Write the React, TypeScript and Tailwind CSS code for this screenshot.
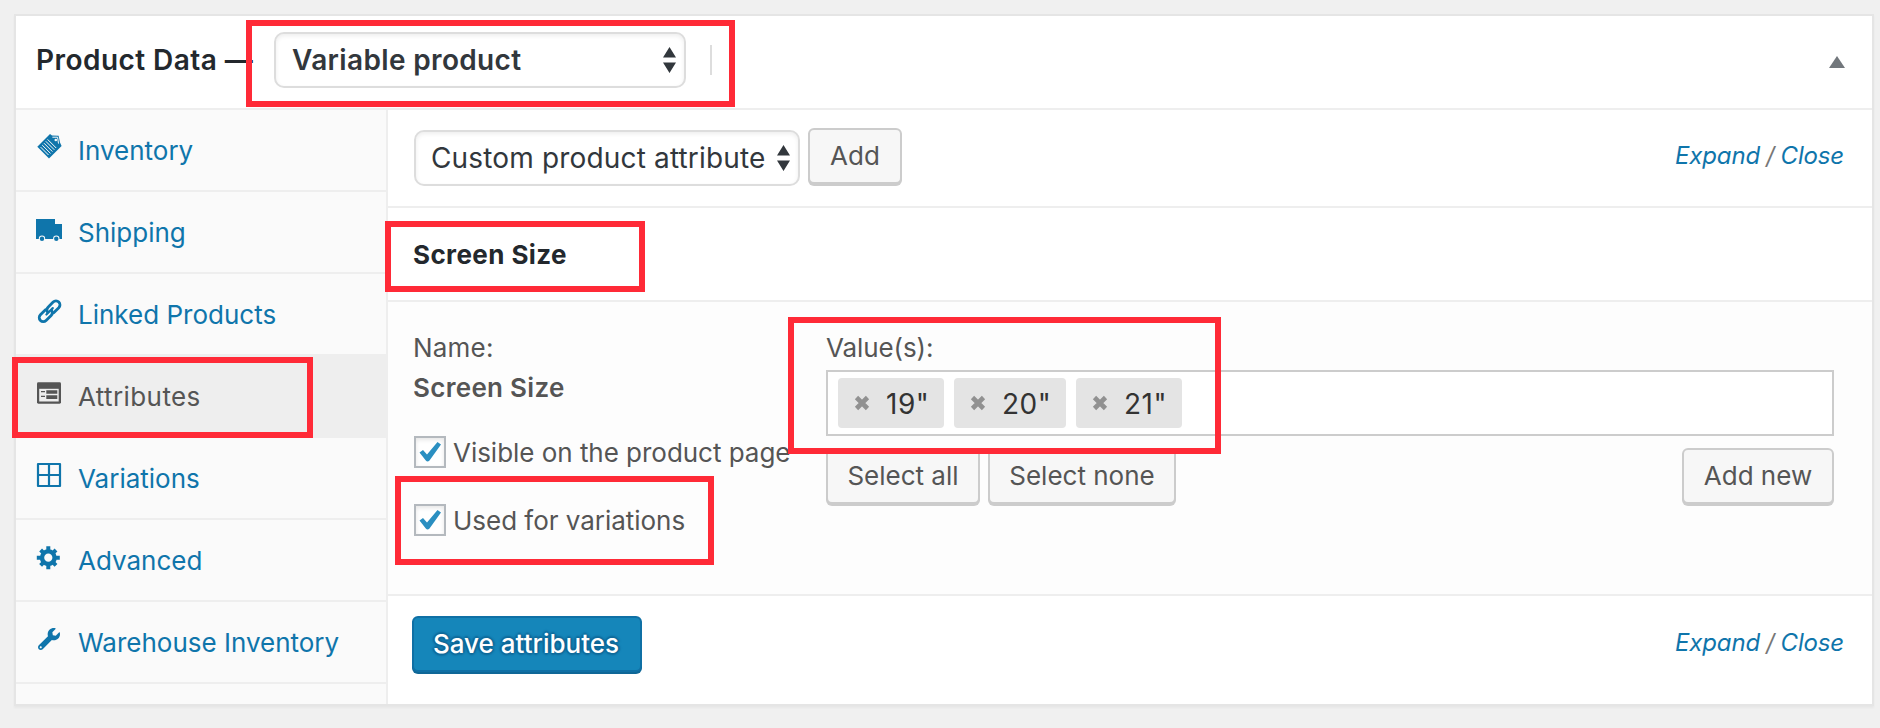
import React from "react";
import { FaWrench } from "react-icons/fa";

function InventoryIcon() {
  return (
    <svg viewBox="0 0 28 28" className="h-7 w-7">
      <path d="M1.3 13.8 14 1l2 1.6 6.6.1 1.4 6.9 1.6 3.4L13 25.5z" fill="currentColor" />
      <path
        d="M11.6 6.4l8.600 8.600M9.800 8.300l8.500 8.500M8 10.200l8.400 8.400M6.200 12.100l8.300 8.300M4.600 14.100l7.900 7.900"
        stroke="#fafafa"
        strokeWidth="1"
      />
      <path d="M16.4 4.200h5.200l.9 6.400" fill="none" stroke="#fafafa" strokeWidth="1" />
      <circle cx="19.8" cy="7" r="1.3" fill="#fafafa" />
    </svg>
  );
}

function TruckIcon() {
  return (
    <svg viewBox="0 0 28 28" className="h-7 w-7">
      <path d="M0 4h19v5h7v15H0z" fill="currentColor" />
      <circle cx="6" cy="23.8" r="3.2" fill="#fafafa" />
      <circle cx="20.3" cy="23.8" r="3.2" fill="#fafafa" />
      <circle cx="6" cy="23.8" r="2.2" fill="currentColor" />
      <circle cx="20.3" cy="23.8" r="2.2" fill="currentColor" />
    </svg>
  );
}

function LinkIcon() {
  return (
    <svg viewBox="0 0 28 28" className="h-7 w-7">
      <g
        transform="translate(13.6 14.3) rotate(-45)"
        fill="none"
        stroke="currentColor"
        strokeWidth="2.8"
        strokeLinecap="round"
      >
        <path d="M1.800 4H9a4 4 0 0 0 0-8H1.800a4 4 0 0 0-3.800 3" />
        <path d="M-1.800-4H-9a4 4 0 0 0 0 8H-1.800a4 4 0 0 0 3.800-3" />
        <path d="M-4.500 0h9" strokeWidth="2.2" />
      </g>
    </svg>
  );
}

function AttributesIcon() {
  return (
    <svg viewBox="0 0 28 28" className="h-7 w-7">
      <rect x="1" y="3.2" width="24" height="21.5" rx="1.4" fill="currentColor" />
      <path d="M3.2 9.8h19.5v12.7H3.2z" fill="#eee" />
      <path d="M5 12h4v1.2H5zM5 16.8h4V18H5zM10.3 11.3H21.3v3.5H10.3zM10.3 16.2H21.3v3.8H10.3z" fill="currentColor" />
    </svg>
  );
}

function GridIcon() {
  return (
    <svg viewBox="0 0 28 28" className="h-7 w-7">
      <path d="M2 3h22v22H2zM13 3v22M2 14h22" fill="none" stroke="currentColor" strokeWidth="2.2" strokeLinejoin="round" />
    </svg>
  );
}

function GearIcon() {
  return (
    <svg viewBox="0 0 28 28" className="h-7 w-7">
      <g stroke="currentColor" transform="translate(12.3 14.7)">
        <circle r="6.3" fill="none" strokeWidth="4.4" />
        <path
          d="M0-11.5V-7M0 7v4.500M-11.5 0H-7M7 0h4.500M-7.700-7.700-5-5M5 5l2.700 2.700M-7.700 7.700-5 5M5-5l2.700-2.700"
          strokeWidth="4"
        />
      </g>
    </svg>
  );
}

const menu = [
  { label: "Inventory", icon: <InventoryIcon /> },
  { label: "Shipping", icon: <TruckIcon /> },
  { label: "Linked Products", icon: <LinkIcon /> },
  { label: "Attributes", icon: <AttributesIcon />, active: true },
  { label: "Variations", icon: <GridIcon /> },
  { label: "Advanced", icon: <GearIcon /> },
  { label: "Warehouse Inventory", icon: <FaWrench className="ml-0.5 h-[22px] w-[22px]" /> },
];

function Arrows() {
  return (
    <svg viewBox="0 0 13 26" className="h-[26px] w-[13px] shrink-0" fill="#32373c">
      <path d="M0 10.500 6.500 0 13 10.500zM0 15.500 6.500 26 13 15.500z" />
    </svg>
  );
}

function Button({ children, className }: { children: React.ReactNode; className: string }) {
  return (
    <button
      className={`h-14 rounded-md border-2 border-[#ccc] bg-[#f7f7f7] text-[26px] leading-none text-[#555] shadow-[0_2px_0_#ccc] ${className}`}
    >
      {children}
    </button>
  );
}

function ExpandClose() {
  return (
    <div className="mr-[28px] text-[24px] leading-[30px] tracking-[-0.15px] text-[#777] italic">
      <a className="font-[450] text-[#0f75ab]">Expand</a>
      <span className="mx-[6px]">/</span>
      <a className="font-[450] text-[#0f75ab]">Close</a>
    </div>
  );
}

function Check({ label, className }: { label: string; className: string }) {
  return (
    <label className={`flex h-8 items-center ${className}`}>
      <span className="flex h-8 w-8 shrink-0 items-center justify-center border-2 border-[#b4b9be] bg-white shadow-[inset_0_2px_4px_rgba(0,0,0,0.1)]">
        <svg viewBox="0 0 22 20" className="h-5 w-[22px]">
          <path d="M0.500 10.500 4 8l4 4.500L18.500 0 22 2.500 10.500 18.500Q8.500 20.500 6.800 18.500z" fill="#2a8fc1" />
        </svg>
      </span>
      <span className="ml-[7px] tracking-[-0.03px] whitespace-nowrap">{label}</span>
    </label>
  );
}

function Tag({ text, className }: { text: string; className: string }) {
  return (
    <span className={`flex h-[50px] items-center rounded bg-[#e4e4e4] pl-4 ${className}`}>
      <svg viewBox="0 0 16 16" className="h-4 w-4 blur-[0.6px]">
        <path d="M2.500 2.500l11 11M13.500 2.500l-11 11" stroke="#919191" strokeWidth="4.600" />
      </svg>
      <span className="ml-4 pt-0.5 text-[28px] tracking-[0.5px] whitespace-nowrap text-[#333]">{text}</span>
    </span>
  );
}

export default function App() {
  return (
    <div className="relative h-[728px] w-[1880px] overflow-hidden bg-[#f0f0f0] p-3.5 font-['Inter',sans-serif] text-[26px]">
      <div className="flex h-[692px] w-[1860px] flex-col border-2 border-[#e5e5e5] bg-white shadow-[0_2px_2px_rgba(0,0,0,0.04)]">
        <header className="flex h-[94px] shrink-0 items-center border-b-2 border-[#eee] pb-1 pl-5">
          <h2 className="w-[238px] text-[28px] font-semibold tracking-[0.45px] whitespace-nowrap text-[#23282d]">
            Product Data —
          </h2>
          <div className="flex h-14 w-[412px] items-center justify-between rounded-[10px] border-2 border-[#ddd] pr-2 pl-4 text-[28px] font-semibold tracking-[0.35px] text-[#32373c] shadow-[inset_0_2px_4px_rgba(0,0,0,0.07)]">
            Variable product
            <Arrows />
          </div>
          <span className="ml-6 h-[30px] w-0.5 bg-[#ddd]" />
          <svg viewBox="0 0 16 12" className="mt-1 mr-[27px] ml-auto h-3 w-4">
            <path d="M0 12 8 0l8 12z" fill="#72777c" />
          </svg>
        </header>

        <div className="flex min-h-0 flex-1">
          <nav className="w-[372px] shrink-0 border-r-2 border-[#eee] bg-[#fafafa]">
            {menu.map((m) => (
              <a
                key={m.label}
                className={`flex items-center border-b-2 border-[#eee] pl-5 ${
                  m.active ? "-mt-0.5 h-[84px] bg-[#eee] pt-0.5 tracking-[0.4px] text-[#555]" : "h-[82px] text-[#0f75ab]"
                }`}
              >
                <span className="-mt-1.5 w-[42px]">{m.icon}</span>
                <span className="whitespace-nowrap">{m.label}</span>
              </a>
            ))}
          </nav>

          <main className="flex min-w-0 flex-1 flex-col">
            <div className="flex h-[98px] items-center border-b-2 border-[#eee] pl-[26px]">
              <div className="flex h-14 w-[386px] items-center justify-between rounded-[10px] border-2 border-[#ddd] pr-2 pl-[15px] text-[28px] tracking-[0.16px] whitespace-nowrap text-[#32373c] shadow-[inset_0_2px_4px_rgba(0,0,0,0.07)]">
                Custom product attribute
                <Arrows />
              </div>
              <Button className="mb-1 ml-2 w-[94px]">Add</Button>
              <div className="mb-1 ml-auto">
                <ExpandClose />
              </div>
            </div>

            <h3 className="flex h-[94px] items-center border-b-2 border-[#eee] pl-[25px] font-bold tracking-[0.4px] text-[#23282d]">
              Screen Size
            </h3>

            <section className="flex h-[294px] border-b-2 border-[#eee] bg-[#fdfdfd] pt-[26px] pl-[26px] text-[#555]">
              <div className="w-[412px] shrink-0">
                <div className="-ml-px h-10 leading-10 tracking-[0.2px]">Name:</div>
                <div className="-ml-px h-10 leading-10 font-semibold tracking-[0.3px]">Screen Size</div>
                <Check label="Visible on the product page" className="mt-7" />
                <Check label="Used for variations" className="mt-9" />
              </div>
              <div className="w-[1008px]">
                <div className="h-10 leading-10 tracking-[-0.1px]">Value(s):</div>
                <div className="mt-0.5 flex h-[66px] items-center gap-2.5 border-2 border-[#ccc] bg-white pl-2.5">
                  <Tag text={'19"'} className="w-[106px]" />
                  <Tag text={'20"'} className="w-[112px]" />
                  <Tag text={'21"'} className="w-[106px]" />
                </div>
                <div className="mt-3 flex">
                  <Button className="w-[154px]">Select all</Button>
                  <Button className="ml-2 w-[188px]">Select none</Button>
                  <Button className="ml-auto w-[152px]">Add new</Button>
                </div>
              </div>
            </section>

            <footer className="flex flex-1 items-start justify-between pt-5 pl-6">
              <button className="h-14 w-[230px] rounded-md border-2 border-[#0f70a5] bg-[#1586ba] pr-0.5 text-[26px] leading-none font-medium text-white shadow-[0_2px_0_#0f6797] [text-shadow:0_-2px_2px_#0f6797,2px_0_2px_#0f6797,0_2px_2px_#0f6797,-2px_0_2px_#0f6797]">
                Save attributes
              </button>
              <div className="mt-3">
                <ExpandClose />
              </div>
            </footer>
          </main>
        </div>
      </div>

      <div className="absolute top-5 left-[246px] h-[87px] w-[489px] border-6 border-[#ff2a37]" />
      <div className="absolute top-[221px] left-[385px] h-[71px] w-[260px] border-6 border-[#ff2a37]" />
      <div className="absolute top-[357px] left-3 h-[81px] w-[301px] border-6 border-[#ff2a37]" />
      <div className="absolute top-[317px] left-[788px] h-[137px] w-[433px] border-6 border-[#ff2a37]" />
      <div className="absolute top-[476px] left-[395px] h-[89px] w-[319px] border-6 border-[#ff2a37]" />
    </div>
  );
}
